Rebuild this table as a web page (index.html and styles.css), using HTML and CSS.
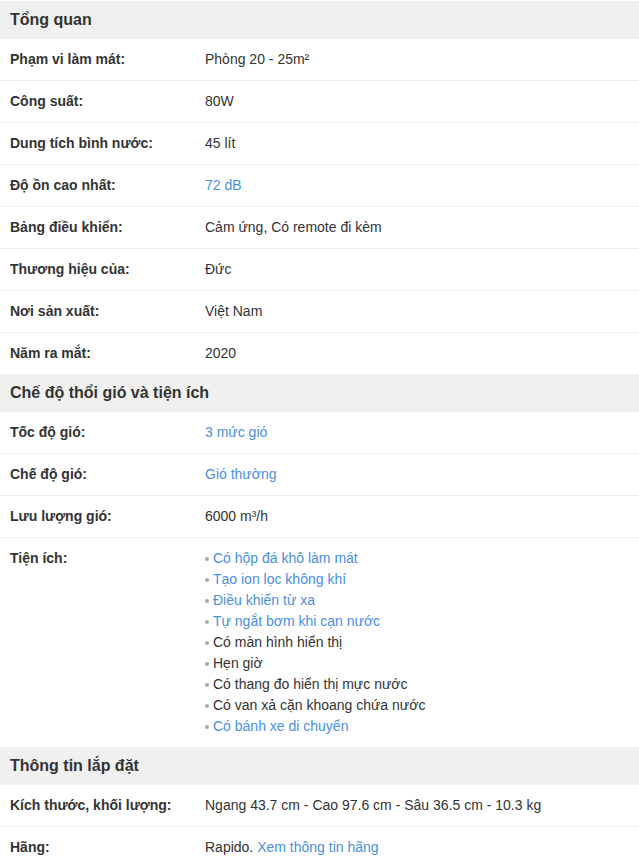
FILE: index.html
```html
<!DOCTYPE html>
<html lang="vi">
<head>
<meta charset="utf-8">
<title>Thông số kỹ thuật</title>
<link rel="stylesheet" href="styles.css">
</head>
<body>
<div class="specs">
  <section class="group">
    <h3 class="group-title">Tổng quan</h3>
    <div class="row"><div class="label">Phạm vi làm mát:</div><div class="value">Phòng 20 - 25m²</div></div>
    <div class="row"><div class="label">Công suất:</div><div class="value">80W</div></div>
    <div class="row"><div class="label">Dung tích bình nước:</div><div class="value">45 lít</div></div>
    <div class="row"><div class="label">Độ ồn cao nhất:</div><div class="value"><a class="link">72 dB</a></div></div>
    <div class="row"><div class="label">Bảng điều khiển:</div><div class="value">Cảm ứng, Có remote đi kèm</div></div>
    <div class="row"><div class="label">Thương hiệu của:</div><div class="value">Đức</div></div>
    <div class="row"><div class="label">Nơi sản xuất:</div><div class="value">Việt Nam</div></div>
    <div class="row"><div class="label">Năm ra mắt:</div><div class="value">2020</div></div>
  </section>
  <section class="group">
    <h3 class="group-title">Chế độ thổi gió và tiện ích</h3>
    <div class="row"><div class="label">Tốc độ gió:</div><div class="value"><a class="link">3 mức gió</a></div></div>
    <div class="row"><div class="label">Chế độ gió:</div><div class="value"><a class="link">Gió thường</a></div></div>
    <div class="row"><div class="label">Lưu lượng gió:</div><div class="value">6000 m³/h</div></div>
    <div class="row"><div class="label">Tiện ích:</div>
      <div class="value">
        <ul class="bullets">
          <li><a class="link">Có hộp đá khô làm mát</a></li>
          <li><a class="link">Tạo ion lọc không khí</a></li>
          <li><a class="link">Điều khiển từ xa</a></li>
          <li><a class="link">Tự ngắt bơm khi cạn nước</a></li>
          <li>Có màn hình hiển thị</li>
          <li>Hẹn giờ</li>
          <li>Có thang đo hiển thị mực nước</li>
          <li>Có van xả cặn khoang chứa nước</li>
          <li><a class="link">Có bánh xe di chuyển</a></li>
        </ul>
      </div>
    </div>
  </section>
  <section class="group">
    <h3 class="group-title">Thông tin lắp đặt</h3>
    <div class="row"><div class="label">Kích thước, khối lượng:</div><div class="value">Ngang 43.7 cm - Cao 97.6 cm - Sâu 36.5 cm - 10.3 kg</div></div>
    <div class="row"><div class="label">Hãng:</div><div class="value">Rapido. <a class="link">Xem thông tin hãng</a></div></div>
  </section>
</div>
</body>
</html>
```

FILE: styles.css
```css
* { box-sizing: border-box; }
html, body { margin: 0; padding: 0; background: #fff; }
body {
  font-family: Arial, "Liberation Sans", sans-serif;
  font-size: 14px;
  line-height: 21px;
  color: #333;
}
.specs { width: 639px; padding-top: 1px; }
.group-title {
  margin: 0;
  background: #f0f0f0;
  padding: 8px 10px;
  line-height: 22px;
  font-size: 16px;
  font-weight: bold;
  color: #333;
}
.row {
  display: grid;
  grid-template-columns: 195px 1fr;
  padding: 10px 0 10px 10px;
  border-bottom: 1px solid #eee;
}
.row:last-child { border-bottom: none; }
.label { font-weight: bold; }
.link { color: #4a90e2; text-decoration: none; }
.bullets { list-style: none; margin: 0; padding: 0; }
.bullets li { position: relative; padding-left: 8px; }
.bullets li::before {
  content: "";
  position: absolute;
  left: 0;
  top: 9px;
  width: 4px;
  height: 4px;
  border-radius: 50%;
  background: #aaa;
}
```
